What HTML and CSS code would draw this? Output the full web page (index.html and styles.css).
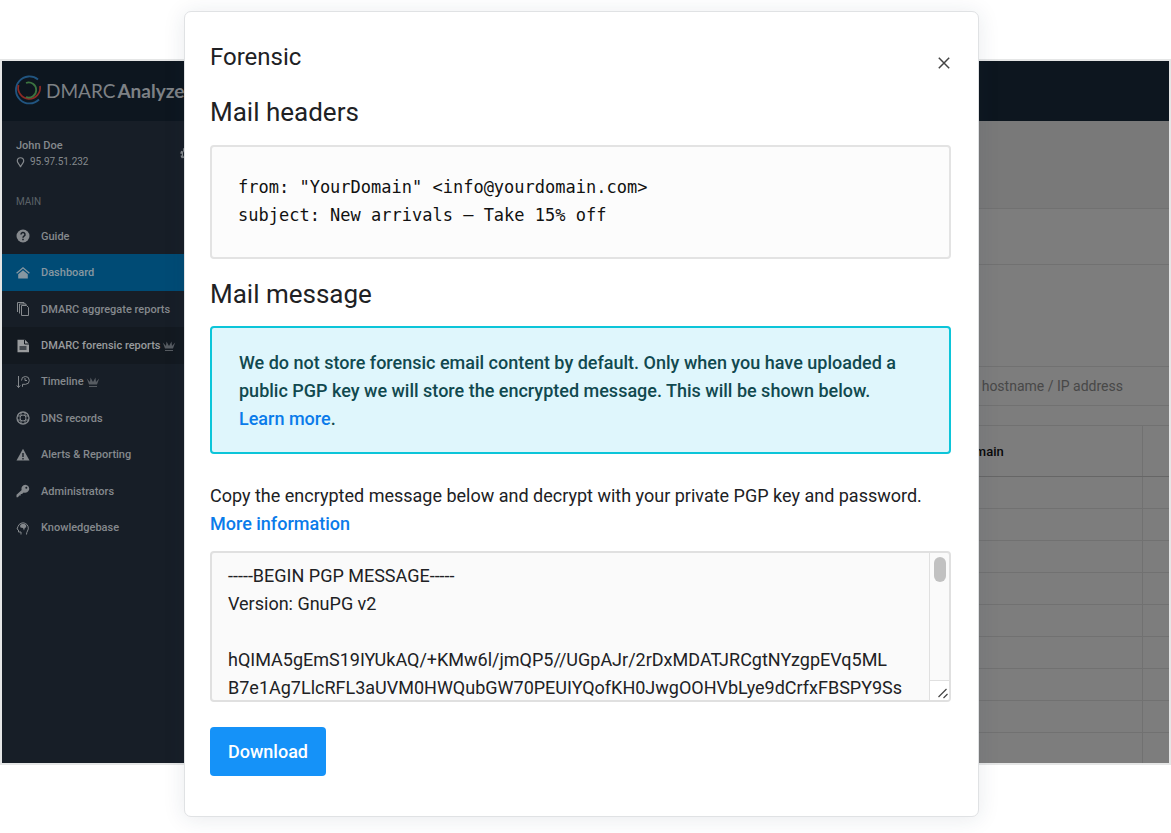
FILE: index.html
```html
<!DOCTYPE html>
<html lang="en">
<head>
<meta charset="utf-8">
<title>DMARC Analyzer - Forensic</title>
<link rel="stylesheet" href="styles.css">
</head>
<body>
<div class="stage">
  <div class="app">
    <header class="topbar">
      <svg class="logo-mark" viewBox="0 0 30 30" fill="none" stroke-width="1.800">
        <path d="M24 4.500A13.500 13.500 0 1 0 25 24.500" stroke="#215580"/>
        <path d="M4.500 10A11 11 0 1 0 26 11" stroke="#8c2a25"/>
        <path d="M12 8A7.500 7.500 0 1 1 12 22" stroke="#3c7440"/>
      </svg>
      <span class="logo-name">DMARC<b>Analyzer</b></span>
    </header>
    <div class="workspace">
      <aside class="sidebar">
        <div class="user">
          <div>
            <div class="user-name">John Doe</div>
            <div class="user-ip">
              <svg class="pin" viewBox="0 0 9 12" fill="none" stroke="currentColor" stroke-width="1.300"><path d="M4.500 11C4 8.500 1 6.500 1 4.300a3.500 3.500 0 0 1 7 0C8 6.500 5 8.500 4.500 11z"/></svg>
              95.97.51.232
            </div>
          </div>
          <svg class="gear" viewBox="0 0 12 12" fill="none" stroke="currentColor"><circle cx="6" cy="6" r="5" stroke-width="1.500" stroke-dasharray="2.300 1.600"/><circle cx="6" cy="6" r="4"/><circle cx="6" cy="6" r="1.500"/></svg>
        </div>
        <div class="section">MAIN</div>
        <nav class="menu">
          <a href="#" class="item">
            <svg viewBox="0 0 14 14"><circle cx="7" cy="7" r="6.500" fill="currentColor"/><path d="M5 5.500a2 2 0 1 1 3 1.700q-1 .6-1 1.500M7 9.800v1.400" fill="none" stroke="#171e27" stroke-width="1.500"/></svg>Guide</a>
          <a href="#" class="item current">
            <svg viewBox="0 0 14 14"><path d="M.6 7.300 7 1.800l6.400 5.500" fill="none" stroke="currentColor" stroke-width="1.300"/><path d="M7 4.200 11.800 8.300V12.500H2.200V8.300z" fill="currentColor"/></svg>Dashboard</a>
          <a href="#" class="item">
            <svg viewBox="0 0 14 14" fill="none" stroke="currentColor"><path d="M5.500 3.500h5l2 2v8h-7zM3.500 11.500V2h6.500v1.500M1.500 10V.5H8V2"/></svg>DMARC aggregate reports</a>
          <a href="#" class="item open">
            <svg viewBox="0 0 14 14"><path d="M1.500.8H9L13 4.800V13.300H1.500z" fill="currentColor"/><path d="M8.500.8V5H13" fill="none" stroke="#131920"/><path d="M3.500 7h7v4h-7z" fill="#454a50"/></svg>DMARC forensic reports
            <svg class="crown" viewBox="0 0 14 12"><path d="M3 8.500.8 2.500 4 6 4.500 1.500 7 6l2.500-4.500L10 6l3.200-3.500L11 8.500z" fill="currentColor"/><path d="M3 10.500h8" stroke="currentColor"/></svg></a>
          <a href="#" class="item">
            <svg viewBox="0 0 14 14" fill="none" stroke="currentColor"><path d="M2.500 1v11.500M.8 10.500l1.700 2 1.700-2M5.500 5.500a3.900 3.900 0 1 1 4 3.800H6.500v2.500M9 3v2.500h2"/></svg>Timeline
            <svg class="crown" viewBox="0 0 14 12"><path d="M3 8.500.8 2.500 4 6 4.500 1.500 7 6l2.500-4.500L10 6l3.200-3.500L11 8.500z" fill="currentColor"/><path d="M3 10.500h8" stroke="currentColor"/></svg></a>
          <a href="#" class="item">
            <svg viewBox="0 0 14 14" fill="none" stroke="currentColor"><circle cx="7" cy="7" r="6" stroke-width="1.300"/><circle cx="7" cy="7" r="3"/><path d="M5 1.500v3.300M9 1.500v3.300M5 9.200v3.300M9 9.200v3.300M1.500 5h3.300M1.500 9h3.300M9.200 5h3.300M9.200 9h3.300"/></svg>DNS records</a>
          <a href="#" class="item">
            <svg viewBox="0 0 14 14"><path d="M7 .8 13.500 12.500H.5z" fill="currentColor"/><path d="M7 5v4M7 10v1.500" stroke="#171e27" stroke-width="1.400"/></svg>Alerts &amp; Reporting</a>
          <a href="#" class="item">
            <svg viewBox="0 0 14 14"><path d="M9.300.7a4 4 0 1 1-1.600 7.700L6 10H4.700v1.500H3.200L2 13.200H.5v-2.500L5.700 6A4 4 0 0 1 9.300.7z" fill="currentColor"/><circle cx="10.300" cy="3.800" r="1" fill="#171e27"/></svg>Administrators</a>
          <a href="#" class="item">
            <svg viewBox="0 0 14 14" fill="none" stroke="currentColor"><path d="M5 13.500v-2.500H2.500V9L1 8 2 5.500a5.300 5.300 0 1 1 9.500 4.500q-1 1.500-1 3.500"/><path d="M4.500 6.500a2.500 2.500 0 0 1 1.500-3.500q3-1 4.300 1.500.5 2-1.500 2.500L8 9.500 7 7z" fill="currentColor" stroke="none"/></svg>Knowledgebase</a>
        </nav>
      </aside>
      <main class="content">
        <div class="band band-title"></div>
        <div class="band band-tabs"></div>
        <div class="band band-filters"></div>
        <input class="search" type="search" aria-label="Search" placeholder="Search on hostname / IP address">
        <table class="results">
          <thead><tr><th class="col-source"></th><th>Domain</th><th class="col-last"></th></tr></thead>
          <tbody>
            <tr><td></td><td></td><td></td></tr>
            <tr><td></td><td></td><td></td></tr>
            <tr><td></td><td></td><td></td></tr>
            <tr><td></td><td></td><td></td></tr>
            <tr><td></td><td></td><td></td></tr>
            <tr><td></td><td></td><td></td></tr>
            <tr><td></td><td></td><td></td></tr>
            <tr><td></td><td></td><td></td></tr>
            <tr><td></td><td></td><td></td></tr>
          </tbody>
        </table>
      </main>
    </div>
  </div>

  <section class="modal" role="dialog" aria-labelledby="modal-title">
    <div class="modal-head">
      <h1 id="modal-title">Forensic</h1>
      <button class="close" type="button" aria-label="Close">
        <svg viewBox="0 0 12 12" fill="none" stroke="currentColor" stroke-width="1.500"><path d="M.8.8l10.400 10.400M11.200.8.8 11.200"/></svg>
      </button>
    </div>
    <h2>Mail headers</h2>
    <pre class="headers">from: "YourDomain" &lt;info@yourdomain.com&gt;
subject: New arrivals – Take 15% off</pre>
    <h2>Mail message</h2>
    <p class="notice">We do not store forensic email content by default. Only when you have uploaded a public PGP key we will store the encrypted message. This will be shown below. <a href="#">Learn more</a>.</p>
    <label class="copy" for="pgp">Copy the encrypted message below and decrypt with your private PGP key and password. <a href="#">More information</a></label>
    <div class="pgp-box">
      <textarea id="pgp" class="pgp" spellcheck="false">-----BEGIN PGP MESSAGE-----
Version: GnuPG v2

hQIMA5gEmS19IYUkAQ/+KMw6l/jmQP5//UGpAJr/2rDxMDATJRCgtNYzgpEVq5ML
B7e1Ag7LlcRFL3aUVM0HWQubGW70PEUIYQofKH0JwgOOHVbLye9dCrfxFBSPY9Ss</textarea>
      <div class="rail" aria-hidden="true">
        <div class="thumb"></div>
        <svg class="grip" viewBox="0 0 18 19" fill="none" stroke="#444" stroke-width="1.200"><path d="M8 16 16 8M13 17l4-4"/></svg>
      </div>
    </div>
    <button class="download" type="button">Download</button>
  </section>
</div>
</body>
</html>
```
FILE: styles.css
```css
* {
  box-sizing: border-box;
}

body {
  margin: 0;
  background: #fff;
  color: #202124;
  font-family: Roboto, "Liberation Sans", sans-serif;
}

a {
  color: #0a7bea;
  text-decoration: none;
}

/* The dialog shares one grid cell with the dimmed application behind it. */
.stage {
  display: grid;
  overflow: hidden;
}

.app,
.modal {
  grid-area: 1 / 1;
}

.app {
  display: flex;
  flex-direction: column;
  align-self: start;
  margin-top: 59px;
  border: 2px solid #e5e6e6;
  background: #7d7d7d;
}

.topbar {
  display: flex;
  align-items: center;
  height: 60px;
  padding: 0 0 2px 12px;
  background: #0d161f;
  color: #7d8185;
}

.logo-mark {
  width: 30px;
  height: 30px;
}

.logo-name {
  margin-left: 2px;
  font-family: Lato, sans-serif;
  font-size: 19px;
}

.logo-name b {
  margin-left: 2px;
  font-weight: 700;
}

.workspace {
  display: flex;
}

.sidebar {
  width: 208px;
  background: #171e27;
  color: #85898d;
  font-size: 11px;
  font-weight: 500;
}

.user {
  display: flex;
  align-items: center;
  justify-content: space-between;
  padding: 17px 16px 0 14px;
  line-height: 16px;
}

.user-ip {
  display: flex;
  align-items: center;
  gap: 5px;
  font-size: 10px;
  font-weight: 400;
}

.pin {
  width: 9px;
  height: 11px;
}

.gear {
  width: 14px;
  height: 14px;
}

.section {
  padding: 24px 14px 8px;
  color: #5c6268;
  font-size: 10px;
  font-weight: 400;
  line-height: 16px;
}

.menu {
  display: grid;
  grid-auto-rows: 1fr;
  height: 328px;
}

.item {
  display: flex;
  align-items: center;
  padding-left: 14px;
  color: inherit;
}

.item svg {
  width: 14px;
  height: 14px;
  margin-right: 11px;
}

.item .crown {
  height: 12px;
  margin-left: 2px;
  color: #565b61;
}

.current {
  background: #004b75;
  color: #8797a1;
}

.open {
  background: #131920;
  color: #999b9d;
}

.content {
  display: flex;
  flex: 1;
  flex-direction: column;
}

.band {
  border-bottom: 1px solid #717171;
}

.band-title {
  height: 88px;
  background: #797979;
}

.band-tabs {
  height: 56px;
}

.band-filters {
  height: 102px;
}

.search {
  height: 39px;
  margin: 0 0 19px;
  padding: 0 0 0 706px;
  border: 0;
  border-bottom: 1px solid #717171;
  border-radius: 0;
  background: transparent;
  color: #333;
  font: 14px Roboto, sans-serif;
}

.search::placeholder {
  color: #484848;
}

.results {
  width: 100%;
  border-collapse: collapse;
  table-layout: fixed;
}

.results th,
.results td {
  height: 32px;
  padding: 0;
  border-top: 1px solid #717171;
  border-left: 1px solid #717171;
}

.results tr:last-child td {
  height: 30px;
}

.results thead th {
  height: 51px;
  border-bottom: 1px solid #666;
  color: #080808;
  font-size: 13px;
  font-weight: 500;
  text-align: left;
}

.results .col-source {
  width: 748px;
}

.results .col-last {
  width: 27px;
}

.modal {
  align-self: start;
  margin: 11px 192px 16px 184px;
  padding: 25px 27px 40px 25px;
  border: 1px solid #e0e2e4;
  border-radius: 7px;
  background: #fff;
  box-shadow: 0 2px 22px rgba(30, 50, 80, 0.1);
}

.modal-head {
  display: flex;
  align-items: center;
  justify-content: space-between;
}

h1,
h2 {
  margin: 0;
  font-weight: 400;
}

h1 {
  font-size: 24px;
  line-height: 40px;
}

h2 {
  font-size: 26px;
  line-height: 40px;
}

.modal-head + h2 {
  margin-top: 15px;
}

.close {
  display: flex;
  margin: 12px 1px 0 0;
  padding: 0;
  border: 0;
  background: none;
  color: #444;
}

.close svg {
  width: 12px;
  height: 12px;
}

.headers {
  margin: 13px 0 15px;
  padding: 26px 26px 28px;
  border: 2px solid #e3e3e3;
  border-radius: 4px;
  background: #fcfcfc;
  color: #111;
  font: 17px/28px "DejaVu Sans Mono", monospace;
}

.notice {
  margin: 12px 0 28px;
  padding: 21px 46px 19px 27px;
  border: 2px solid #0cc5d9;
  border-radius: 4px;
  background: #dff6fc;
  color: #11494f;
  font-size: 18px;
  font-weight: 500;
  line-height: 28px;
}

.copy {
  display: block;
  font-size: 18px;
  line-height: 28px;
}

.copy a {
  font-weight: 500;
}

.pgp-box {
  display: flex;
  height: 151px;
  margin: 13px 0 25px;
  overflow: hidden;
  border: 2px solid #e0e0e0;
  border-radius: 4px;
  background: #fafafa;
}

.pgp {
  flex: 1;
  padding: 9px 16px 0;
  overflow: hidden;
  border: 0;
  background: transparent;
  color: #202124;
  font: 18px/28px Roboto, sans-serif;
  white-space: pre;
  resize: none;
}

.rail {
  display: flex;
  flex-direction: column;
  justify-content: space-between;
  width: 20px;
  border-left: 1px solid #e0e0e0;
}

.thumb {
  width: 12px;
  height: 25px;
  margin: 4px 0 0 4px;
  border-radius: 6px;
  background: #c1c1c1;
}

.grip {
  height: 20px;
  border-top: 1px solid #e0e0e0;
  background: #fff;
}

.download {
  display: block;
  padding: 11px 18px 10px;
  border: 0;
  border-radius: 4px;
  background: #1592f8;
  color: #fff;
  font: 500 18px/28px Roboto, sans-serif;
}
```
